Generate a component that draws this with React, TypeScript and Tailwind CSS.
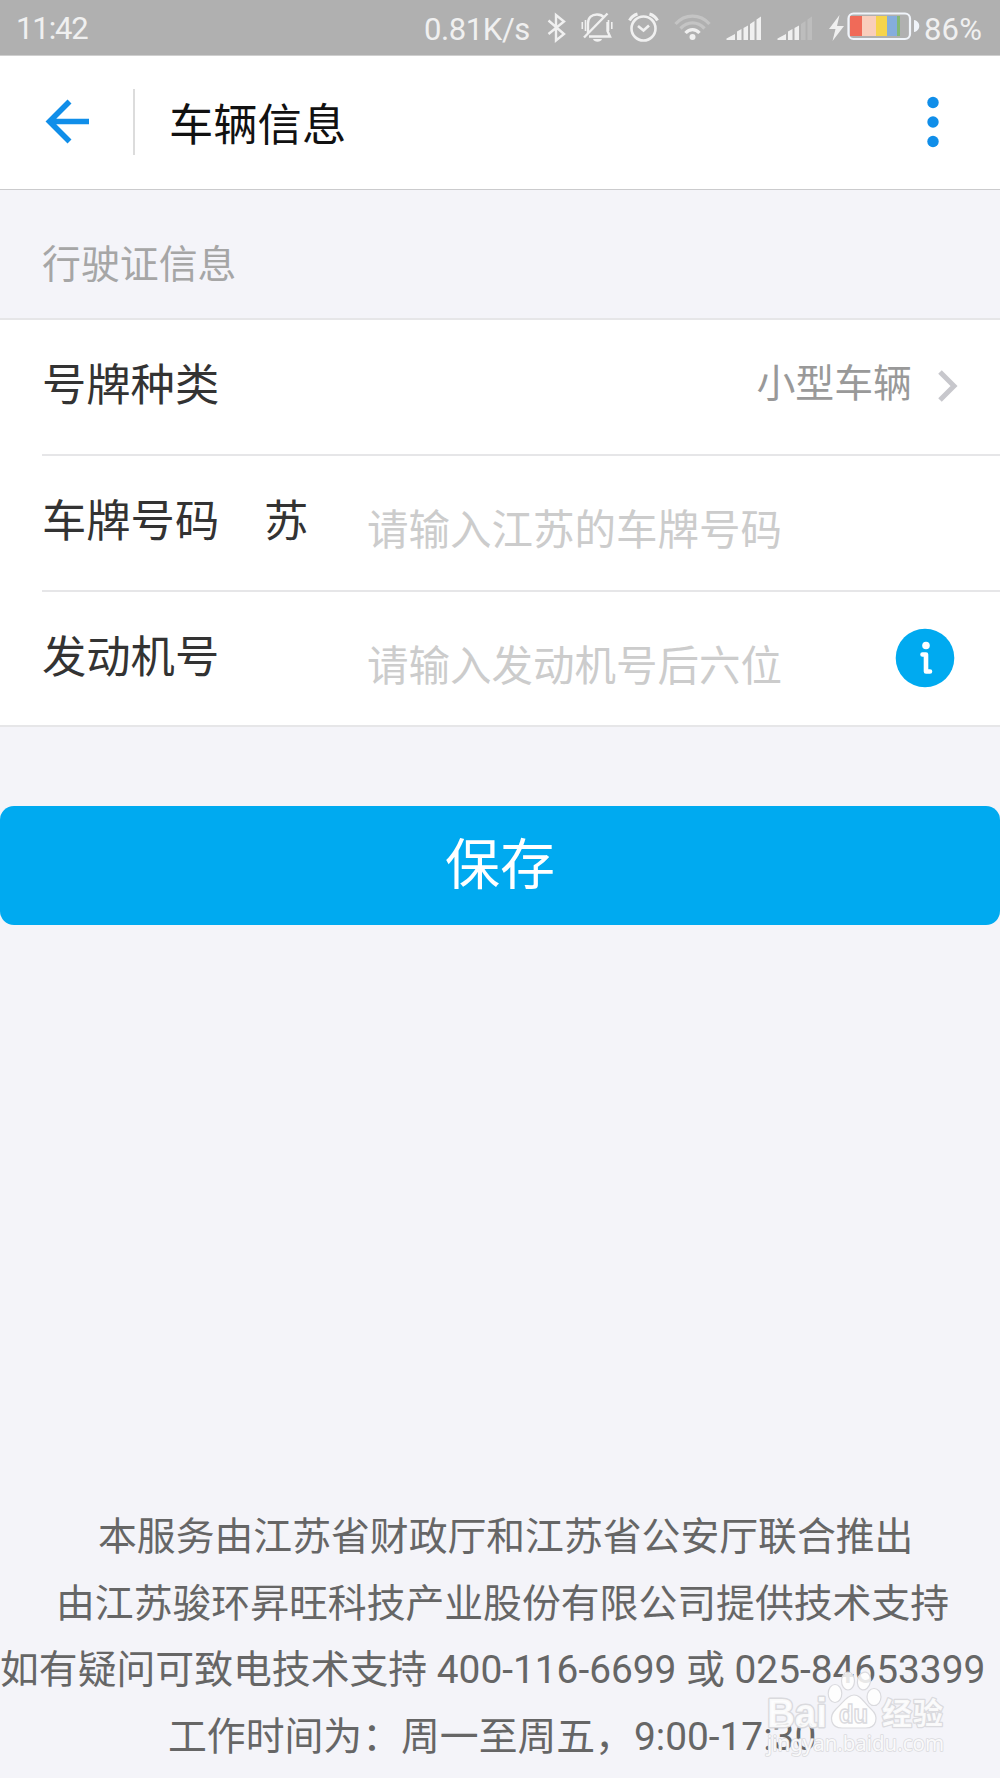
import React from "react";

const cjk = "font-['Noto_Sans_CJK_SC',sans-serif]";
const mixed = "font-['Roboto','Noto_Sans_CJK_SC',sans-serif]";

const footerLines = [
  { text: "本服务由江苏省财政厅和江苏省公安厅联合推出", indent: "pl-[98px]" },
  { text: "由江苏骏环昇旺科技产业股份有限公司提供技术支持", indent: "pl-[56px]" },
  { text: "如有疑问可致电技术支持 400-116-6699 或 025-84653399", indent: "pl-0" },
  { text: "工作时间为：周一至周五，9:00-17:30", indent: "pl-[168px]" },
];

function StatusIcons() {
  return (
    <svg width="490" height="55" viewBox="410 0 490 55" className="absolute left-[410px] top-0" fill="none" stroke="#f0f0f0">
      {/* bluetooth */}
      <path d="M548.5 20.5L564 34L556 40.5V15L564 21.5L548.5 34" strokeWidth="2.4" />
      {/* muted bell */}
      <g strokeWidth="2.4">
        <path d="M588 33V23.5C588 17.5 592 14.5 597 14.5C600 14.5 602.5 15.5 604 17.5M607.500 22V31L610 36.500H589" />
        <path d="M607.500 13.500L584 37.500" />
        <path d="M582.300 22V29M585.500 20V31M608.500 20V31M611.800 22V29" strokeWidth="1.6" />
      </g>
      <path d="M593 39H602C601 42.500 594 42.500 593 39Z" fill="#f0f0f0" stroke="none" />
      {/* alarm */}
      <g strokeWidth="2.6">
        <circle cx="643.500" cy="28.500" r="12" />
        <path d="M638 26L643.500 30.500L649 25.500" />
        <path d="M629.500 20.500C631 17.500 634 15 637.500 14M649.500 14C653 15 656 17.500 657.500 20.500" strokeWidth="3" />
      </g>
      {/* wifi */}
      <g strokeWidth="3.300">
        <path d="M675.500 24C685 13.500 700 13.500 709.500 24M680.500 28.500C687.500 21 697.500 21 704.500 28.500" stroke="#c4c4c4" />
        <path d="M685.500 33C689.500 28.500 695.500 28.500 699.500 33" />
      </g>
      <circle cx="692.500" cy="37" r="3" fill="#f0f0f0" stroke="none" />
      {/* signal */}
      <g fill="#f0f0f0" stroke="none">
        <path d="M726.500 40V38.500L735 34V40ZM737 40V31.500L741.500 29V40ZM743.500 40V28L748 25.500V40ZM750 40V24L754.500 21V40ZM756.500 40V19.500L761 16.500V40Z" />
        <path d="M777.500 40V38.500L786 34V40ZM788 40V31.500L792.500 29V40ZM794.500 40V28L799 25.500V40Z" />
        <path d="M801 40V24L805.500 21V40ZM807.500 40V19.500L812 16.500V40Z" fill="#bdbdbd" />
        <path d="M839.500 15L829 29H835.500L832.500 41L844 26H837Z" />
      </g>
      {/* battery */}
      <g stroke="none">
        <path d="M850 16H862V36H850Z" fill="#f06a58" />
        <path d="M862 16H876V36H862Z" fill="#f9cebc" />
        <path d="M876 16H887V36H876Z" fill="#f6d44c" />
        <path d="M887 16H897V36H887Z" fill="#85addc" />
        <path d="M897 16H900V36H897Z" fill="#83b873" />
      </g>
    </svg>
  );
}

function StatusBar() {
  return (
    <div className="relative h-[56px] shrink-0 flex items-center justify-between bg-[#b0b0b0] border-b border-[#cfcfcf] font-['Roboto',sans-serif] text-[31px] text-[#f0f0f0] whitespace-nowrap">
      <span className="pl-[16px] pt-[4px] tracking-[-1.100px]">11:42</span>
      <span className="absolute left-[424px] top-[7px] tracking-[-0.400px]">0.81K/s</span>
      <StatusIcons />
      <svg width="74" height="30" viewBox="0 0 74 30" className="absolute left-[846px] top-[11px]">
        <rect x="2.500" y="2.500" width="61.500" height="25.500" rx="5" fill="none" stroke="#f0f4fa" strokeWidth="2.200" />
        <path d="M68 9C75 10 75 20 68 21Z" fill="#f0f4fa" />
      </svg>
      <span className="absolute left-[924px] top-[7px] tracking-[0.200px]">86%</span>
    </div>
  );
}

function Header() {
  return (
    <header className="h-[134px] shrink-0 flex items-center bg-white border-b border-[#cbcbcd] pb-px">
      <svg width="46" height="46" viewBox="0 0 46 46" className="ml-[43px]" fill="none" stroke="#108ee9" strokeWidth="5.600">
        <path d="M26.500 2.500L6.500 22.500L26.500 42.500M6.500 22.500H46" />
      </svg>
      <div className="ml-[44px] h-[66px] w-[2px] bg-[#dcdcdc]" />
      <h1 className="ml-[34px] -mt-px text-[44.300px] leading-[60px] text-[#111]">车辆信息</h1>
      <svg width="14" height="54" viewBox="0 0 14 54" className="ml-auto mr-[60px]" fill="#108ee9">
        <circle cx="7" cy="7.500" r="5.700" />
        <circle cx="7" cy="27" r="5.700" />
        <circle cx="7" cy="46.500" r="5.700" />
      </svg>
    </header>
  );
}

function VehicleForm() {
  return (
    <div className="bg-white border-y-2 border-[#e6e6e8] pl-[42px] text-[44.300px] text-[#333]">
      <div className="h-[136px] flex border-b-2 border-[#e6e6e8]">
        <span className="mt-[30px] leading-[64px]">号牌种类</span>
        <span className="ml-auto mt-[28px] text-[38.900px] leading-[64px] text-[#999]">小型车辆</span>
        <svg width="22" height="34" viewBox="0 0 22 34" className="ml-[25px] mr-[41px] mt-[49px]" fill="none" stroke="#c7c7cc" strokeWidth="5">
          <path d="M3 3L17 17L3 31" />
        </svg>
      </div>
      <div className="h-[136px] flex border-b-2 border-[#e6e6e8]">
        <span className="mt-[30px] w-[222px] leading-[64px]">车牌号码</span>
        <span className="mt-[30px] w-[103px] leading-[64px]">苏</span>
        <input
          className="mt-[39px] h-[64px] w-[480px] text-[41.500px] placeholder:text-[#ccc] outline-none"
          placeholder="请输入江苏的车牌号码"
        />
      </div>
      <div className="h-[133px] flex">
        <span className="mt-[30px] w-[325px] leading-[64px]">发动机号</span>
        <input
          className="mt-[39px] h-[64px] w-[480px] text-[41.500px] placeholder:text-[#ccc] outline-none"
          placeholder="请输入发动机号后六位"
        />
        <svg width="60" height="60" viewBox="0 0 60 60" className="ml-auto mr-[45px] mt-[36px]">
          <circle cx="30" cy="30" r="29.300" fill="#00aaf0" />
          <circle cx="31" cy="17.500" r="3.800" fill="#fff" />
          <path d="M27.500 26.500H31V43.500H35" fill="none" stroke="#fff" strokeWidth="4.600" strokeLinecap="round" strokeLinejoin="round" />
        </svg>
      </div>
    </div>
  );
}

function Watermark() {
  return (
    <svg width="200" height="100" viewBox="760 1665 200 100" className="absolute left-[760px] top-[1665px]" fill="#fff" fillOpacity="0.85" stroke="#dadade" strokeWidth="1.200">
      <g strokeLinejoin="round" style={{ paintOrder: "stroke" }}>
        <text x="767" y="1726.500" fontSize="40" fontWeight="700" textLength="60" lengthAdjust="spacingAndGlyphs" strokeWidth="3" fontFamily="Liberation Sans, sans-serif">Bai</text>
        <text x="882" y="1724" fontSize="30" fontWeight="700" textLength="61" strokeWidth="2.500" fontFamily="Noto Sans CJK SC, sans-serif">经验</text>
        <text x="767" y="1750.500" fontSize="21.500" textLength="177" lengthAdjust="spacingAndGlyphs" strokeWidth="1.600" fontFamily="Noto Sans, sans-serif">jingyan.baidu.com</text>
      </g>
      <ellipse cx="835" cy="1693.500" rx="6.800" ry="9" />
      <ellipse cx="848" cy="1681" rx="6.500" ry="9" />
      <ellipse cx="864" cy="1681" rx="6.500" ry="9" transform="rotate(12 864 1681)" />
      <ellipse cx="874" cy="1697" rx="7" ry="8.500" />
      <path d="M854 1695C861 1695 864 1703 871 1709C880 1717 876 1728 866 1728C860 1728 848 1728 842 1728C831 1728 828 1717 836 1709C843 1703 847 1695 854 1695Z" />
      <text x="839" y="1723" fontSize="25" fontWeight="700" textLength="29" lengthAdjust="spacingAndGlyphs" strokeWidth="1.500" fontFamily="Liberation Sans, sans-serif">du</text>
    </svg>
  );
}

export default function App() {
  return (
    <div className={`relative w-[1000px] h-[1778px] overflow-hidden flex flex-col bg-[#f4f4f9] ${cjk}`}>
      <StatusBar />
      <Header />
      <h2 className="h-[128px] shrink-0 pl-[42px] pt-[39px] text-[38.900px] leading-[64px] text-[#a6a6a6]">行驶证信息</h2>
      <VehicleForm />
      <button className="mt-[79px] h-[119px] shrink-0 rounded-[14px] bg-[#00aaf0] text-[55px] leading-[108px] pb-[11px] text-white">
        保存
      </button>
      <footer className={`mt-auto mb-[8px] text-[38.850px] text-[#666] whitespace-nowrap ${mixed}`}>
        {footerLines.map((line) => (
          <p key={line.text} className={`h-[66.500px] leading-[66.500px] ${line.indent}`}>
            {line.text}
          </p>
        ))}
      </footer>
      <Watermark />
    </div>
  );
}
